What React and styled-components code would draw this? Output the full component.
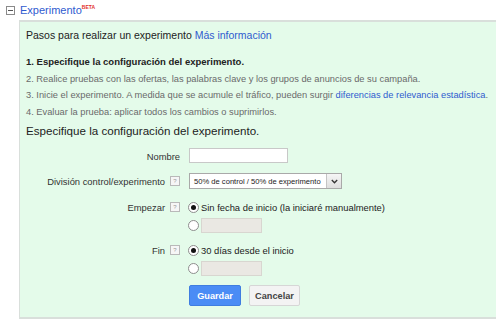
import React from "react";
import styled, { createGlobalStyle } from "styled-components";

const GlobalStyle = createGlobalStyle`
  html, body {
    margin: 0;
    padding: 0;
    background: #ffffff;
    font-family: "Liberation Sans", Arial, sans-serif;
    overflow: hidden;
  }
`;

const Page = styled.div`
  width: 496px;
  height: 323px;
`;

const Header = styled.div`
  display: flex;
  align-items: center;
  height: 20px;
  padding-left: 6px;
`;

const Toggle = styled.span`
  width: 7px;
  height: 7px;
  border: 1px solid #8a8a8a;
  position: relative;
  margin-right: 5px;
  background: #fff;
  &::after {
    content: "";
    position: absolute;
    left: 1px;
    right: 1px;
    top: 3px;
    height: 1px;
    background: #555;
  }
`;

const Title = styled.a`
  color: #2f5bcf;
  font-size: 11px;
  text-decoration: none;
`;

const Beta = styled.sup`
  color: #e3322b;
  font-size: 5px;
  font-weight: bold;
  vertical-align: 5px;
`;

const Panel = styled.div`
  margin-left: 19px;
  height: 299px;
  box-sizing: border-box;
  background: #e4fbea;
  border-top: 2px solid #d9dfdb;
  border-left: 1px solid #d9dfdb;
  border-bottom: 2px solid #d9dfdb;
  padding: 5px 0 0 6px;
`;

const Intro = styled.div`
  font-size: 10.5px;
  color: #222;
  line-height: 16px;
`;

const Link = styled.a`
  color: #2f5bcf;
  text-decoration: none;
`;

const Steps = styled.ol`
  list-style: none;
  margin: 11px 0 0 0;
  padding: 0;
  line-height: 16.5px;
  white-space: nowrap;
`;

const Step = styled.li`
  color: ${(p) => (p.$active ? "#222" : "#6a6a6a")};
  font-weight: ${(p) => (p.$active ? "bold" : "normal")};
  font-size: ${(p) => (p.$active ? "9.5px" : "9.3px")};
`;

const Subtitle = styled.div`
  font-size: 11.6px;
  color: #222;
  margin-top: 2px;
  line-height: 18px;
`;

const Form = styled.div`
  display: grid;
  grid-template-columns: 154px 1fr;
  column-gap: 9px;
  margin-top: 8px;
  font-size: 9.4px;
  color: #333;
`;

const Label = styled.div`
  display: flex;
  justify-content: flex-end;
  align-items: center;
  gap: 5px;
  height: 16px;
  margin-top: ${(p) => p.$mt || 0}px;
`;

const Field = styled.div`
  display: flex;
  flex-direction: column;
  gap: 2px;
  margin-top: ${(p) => p.$mt || 0}px;
`;

const Help = styled.span`
  width: 8px;
  height: 8px;
  border: 1px solid #b9b9b9;
  background: #f6f6f6;
  color: #999;
  font-size: 6px;
  line-height: 8px;
  text-align: center;
`;

const TextInput = styled.div`
  width: ${(p) => p.$w || 99}px;
  height: 15px;
  background: ${(p) => (p.$disabled ? "#eae8e3" : "#fff")};
  border: 1px solid ${(p) => (p.$disabled ? "#d8d6d0" : "#c8c8c8")};
  box-sizing: border-box;
`;

const Select = styled.div`
  width: 153px;
  height: 16px;
  display: flex;
  border: 1px solid #a9a9a9;
  background: #fff;
  box-sizing: border-box;
  font-size: 7.6px;
  color: #222;
  align-items: center;
`;

const SelectText = styled.span`
  flex: 1;
  padding-left: 4px;
  white-space: nowrap;
`;

const SelectArrow = styled.span`
  width: 14px;
  height: 14px;
  border-left: 1px solid #c4c4c4;
  background: linear-gradient(#f6f6f6, #dedede);
  display: flex;
  align-items: center;
  justify-content: center;
`;

const RadioRow = styled.div`
  display: flex;
  align-items: center;
  gap: 2px;
  height: 16px;
  color: #222;
`;

const Radio = styled.span`
  width: 9px;
  height: 9px;
  border-radius: 50%;
  border: 1px solid #8d8d8d;
  background: #fff;
  display: flex;
  align-items: center;
  justify-content: center;
  margin-left: -1px;
  &::after {
    content: "";
    width: 5px;
    height: 5px;
    border-radius: 50%;
    background: ${(p) => (p.$checked ? "#111" : "transparent")};
  }
`;

const Buttons = styled.div`
  display: flex;
  gap: 8px;
  margin-top: 9px;
`;

const Button = styled.button`
  height: 21px;
  width: ${(p) => (p.$primary ? 52 : 51)}px;
  padding: 0;
  border-radius: 2px;
  font-family: "Liberation Sans", Arial, sans-serif;
  font-size: 9.2px;
  font-weight: bold;
  color: ${(p) => (p.$primary ? "#fff" : "#444")};
  background: ${(p) => (p.$primary ? "#4a8cf5" : "#f3f3f3")};
  border: 1px solid ${(p) => (p.$primary ? "#3f7de0" : "#d6d6d6")};
`;

const Arrow = () => (
  <svg width="7" height="5" viewBox="0 0 7 5">
    <path d="M0.8 1 L3.5 3.8 L6.2 1" fill="none" stroke="#333" strokeWidth="1.3" />
  </svg>
);

export default function App() {
  return (
    <Page>
      <GlobalStyle />
      <Header>
        <Toggle />
        <Title>
          Experimento<Beta>BETA</Beta>
        </Title>
      </Header>
      <Panel>
        <Intro>
          Pasos para realizar un experimento <Link>Más información</Link>
        </Intro>
        <Steps>
          <Step $active>1. Especifique la configuración del experimento.</Step>
          <Step>
            2. Realice pruebas con las ofertas, las palabras clave y los grupos de anuncios de su campaña.
          </Step>
          <Step>
            3. Inicie el experimento. A medida que se acumule el tráfico, pueden surgir{" "}
            <Link>diferencias de relevancia estadística</Link>.
          </Step>
          <Step>4. Evaluar la prueba: aplicar todos los cambios o suprimirlos.</Step>
        </Steps>
        <Subtitle>Especifique la configuración del experimento.</Subtitle>
        <Form>
          <Label>Nombre</Label>
          <Field>
            <TextInput />
          </Field>

          <Label $mt={9}>
            División control/experimento <Help>?</Help>
          </Label>
          <Field $mt={9}>
            <Select>
              <SelectText>50% de control / 50% de experimento</SelectText>
              <SelectArrow>
                <Arrow />
              </SelectArrow>
            </Select>
          </Field>

          <Label $mt={10}>
            Empezar <Help>?</Help>
          </Label>
          <Field $mt={10}>
            <RadioRow>
              <Radio $checked />
              Sin fecha de inicio (la iniciaré manualmente)
            </RadioRow>
            <RadioRow>
              <Radio />
              <TextInput $disabled $w={61} />
            </RadioRow>
          </Field>

          <Label $mt={9}>
            Fin <Help>?</Help>
          </Label>
          <Field $mt={9}>
            <RadioRow>
              <Radio $checked />
              30 días desde el inicio
            </RadioRow>
            <RadioRow>
              <Radio />
              <TextInput $disabled $w={61} />
            </RadioRow>
          </Field>

          <div />
          <Buttons>
            <Button $primary>Guardar</Button>
            <Button>Cancelar</Button>
          </Buttons>
        </Form>
      </Panel>
    </Page>
  );
}
